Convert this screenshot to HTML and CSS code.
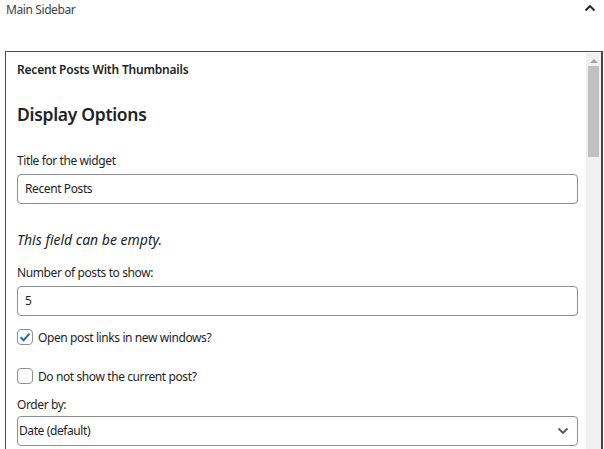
FILE: index.html
```html
<!DOCTYPE html>
<html>
<head>
<meta charset="utf-8">
<link rel="stylesheet" href="styles.css">
</head>
<body>
<div class="panel-head">
  <span class="panel-title">Main Sidebar</span>
  <svg class="chev-up" width="12" height="8" viewBox="0 0 12 8"><path d="M1.5 6.5 L6 2 L10.5 6.5" fill="none" stroke="#1e1e1e" stroke-width="1.8"/></svg>
</div>
<div class="widget-box">
  <div class="widget-content">
    <div class="widget-title">Recent Posts With Thumbnails</div>
    <h3 class="section-head">Display Options</h3>
    <label class="field-label">Title for the widget</label>
    <div class="text-input">Recent Posts</div>
    <p class="hint">This field can be empty.</p>
    <label class="field-label second">Number of posts to show:</label>
    <div class="text-input">5</div>
    <div class="check-row first">
      <span class="checkbox checked"><svg width="12" height="10" viewBox="0 0 12 10"><path d="M1.5 5.2 L4.6 8.2 L10.5 1.6" fill="none" stroke="#2271b1" stroke-width="2"/></svg></span>
      <span>Open post links in new windows?</span>
    </div>
    <div class="check-row second">
      <span class="checkbox"></span>
      <span>Do not show the current post?</span>
    </div>
    <label class="field-label third">Order by:</label>
    <div class="select-input"><span>Date (default)</span>
      <svg width="12" height="8" viewBox="0 0 12 8"><path d="M1.5 1.5 L6 6 L10.5 1.5" fill="none" stroke="#50575e" stroke-width="1.8"/></svg>
    </div>
  </div>
  <div class="scrollbar">
    <div class="scroll-arrow"></div>
    <div class="scroll-thumb"></div>
  </div>
</div>
</body>
</html>
```
FILE: styles.css
```css
html, body {
  margin: 0;
  padding: 0;
  background: #fff;
  font-family: "Noto Sans", "Open Sans", sans-serif;
  font-size: 12px;
  letter-spacing: -0.4px;
  color: #1e1e1e;
  overflow: hidden;
}
.panel-head {
  display: flex;
  align-items: center;
  justify-content: space-between;
  height: 18px;
  padding: 0 8px 0 6px;
}
.panel-title {
  color: #3c434a;
  font-size: 12px;
}
.chev-up {
  margin-top: -2px;
}
.widget-box {
  margin: 33px 1px 0 5px;
  border: 1px solid #4a4a4a;
  border-right-width: 2px;
  display: flex;
  height: 420px;
}
.widget-content {
  flex: 1;
  padding: 9px 8px 0 11px;
}
.widget-title {
  font-weight: 600;
  font-size: 12px;
  letter-spacing: -0.2px;
  line-height: 18px;
  color: #1d2327;
}
.section-head {
  margin: 23px 0 0;
  font-size: 17.5px;
  letter-spacing: -0.3px;
  font-weight: 600;
  line-height: 24px;
  color: #1d2327;
}
.field-label {
  display: block;
  margin-top: 26px;
  line-height: 18px;
}
.field-label.second { margin-top: 14px; }
.field-label.third { margin-top: 11px; }
.text-input, .select-input {
  margin-top: 4px;
  height: 28px;
  border: 1px solid #8c8f94;
  border-radius: 4px;
  padding: 0 8px 0 7px;
  display: flex;
  align-items: center;
  line-height: 18px;
}
.hint {
  margin: 26px 0 0;
  font-style: italic;
  font-size: 14px;
  letter-spacing: 0;
  line-height: 20px;
  color: #1d2327;
}
.check-row {
  display: flex;
  align-items: center;
  gap: 5px;
  height: 18px;
  margin-top: 12px;
}
.check-row.second { margin-top: 21px; }
.checkbox {
  width: 14px;
  height: 14px;
  border: 1px solid #8c8f94;
  border-radius: 4px;
  display: flex;
  align-items: center;
  justify-content: center;
  flex: none;
}
.select-input {
  margin-top: 2px;
  padding: 0 8px 0 1px;
  justify-content: space-between;
}
.scrollbar {
  width: 15px;
  background: #f0f0f0;
  margin-top: 1px;
  display: flex;
  flex-direction: column;
  align-items: center;
}
.scroll-arrow {
  width: 0;
  height: 0;
  border-left: 4px solid transparent;
  border-right: 4px solid transparent;
  border-bottom: 4px solid #a3a3a3;
  margin-top: 6px;
}
.scroll-thumb {
  width: 11px;
  height: 91px;
  background: #c1c1c1;
  margin-top: 3px;
}
```
